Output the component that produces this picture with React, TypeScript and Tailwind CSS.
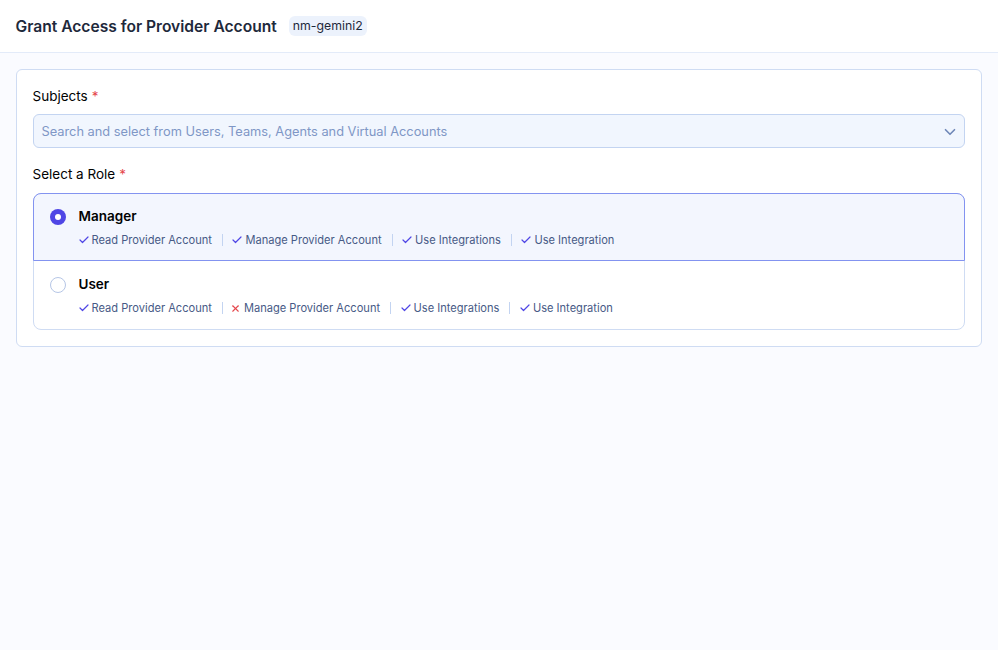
import { Check, X, ChevronDown } from "lucide-react";

const roles = [
  {
    name: "Manager",
    selected: true,
    perms: [
      { label: "Read Provider Account", ok: true },
      { label: "Manage Provider Account", ok: true },
      { label: "Use Integrations", ok: true },
      { label: "Use Integration", ok: true },
    ],
  },
  {
    name: "User",
    selected: false,
    perms: [
      { label: "Read Provider Account", ok: true },
      { label: "Manage Provider Account", ok: false },
      { label: "Use Integrations", ok: true },
      { label: "Use Integration", ok: true },
    ],
  },
];

export default function App() {
  return (
    <div className="min-h-[650px] bg-[#fafbff] font-['Inter',sans-serif] text-[#010202]">
      {/* Header */}
      <header className="flex h-[53px] items-center gap-3 border-b border-[#e3ebf9] bg-white pl-[15.5px]">
        <h1 className="pt-[2px] text-[15.6px] leading-6 font-semibold text-[#1e293b]">Grant Access for Provider Account</h1>
        <span className="rounded-md bg-[#ecf2fc] px-1 py-0.5 text-[12.3px] leading-4 text-[#1e293b]">nm-gemini2</span>
      </header>

      <div className="pt-4 pr-[16.5px] pb-4 pl-[15.5px]">
        <div className="rounded-md border border-[#cfdcf3] bg-white px-4 pt-4 pb-4">
          <div className="flex h-5 items-center pt-px text-[13.5px]">
            Subjects <span className="ml-1 text-[#e5484d]">*</span>
          </div>
          <div className="mt-2 flex h-[34px] items-center justify-between rounded-md border border-[#c3d4f1] bg-[#f1f6fe] pr-[5px] pl-2">
            <span className="pt-[2px] text-[12.8px] text-[#7f97c6]">Search and select from Users, Teams, Agents and Virtual Accounts</span>
            <ChevronDown className="mt-px h-[18px] w-[18px] text-[#6f88b8]" strokeWidth={2.2} />
          </div>

          <div className="mt-4 flex h-5 items-center pt-px text-[13.5px]">
            Select a Role <span className="ml-1 text-[#e5484d]">*</span>
          </div>

          <div className="mt-[9px] rounded-lg border border-[#cfdcf3]">
            {roles.map((role) => (
              <div
                key={role.name}
                className={
                  role.selected
                    ? "-m-px flex h-[68px] gap-[12.5px] rounded-t-lg border border-[#8393f0] bg-[#f3f6fe] pt-3 pl-[16.5px]"
                    : "flex h-[69px] gap-[12.5px] pt-[14px] pl-[16.5px]"
                }
              >
                {role.selected ? (
                  <span className="mt-[3px] flex h-4 w-4 items-center justify-center rounded-full bg-[#4f46e5]">
                    <span className="h-1.5 w-1.5 rounded-full bg-white" />
                  </span>
                ) : (
                  <span className="mt-[3px] h-4 w-4 rounded-full border border-[#b6c6e6] bg-white" />
                )}
                <div>
                  <div className="text-[13.5px] leading-5 font-semibold">{role.name}</div>
                  <div className="mt-[6px] flex items-center text-[11.1px] leading-4 text-[#475a86]">
                    {role.perms.map((p, i) => (
                      <div key={p.label} className="flex items-center">
                        {i > 0 && <span className="mr-[9.5px] ml-[10px] h-3 w-px bg-[#c3d4f1]" />}
                        {p.ok ? (
                          <Check className="mr-[2px] -ml-[1px] h-3 w-3 text-[#4f46e5]" strokeWidth={2.4} />
                        ) : (
                          <X className="mr-[3px] -ml-[2.5px] h-[11px] w-[11px] text-[#e5484d]" strokeWidth={2.4} />
                        )}
                        <span>{p.label}</span>
                      </div>
                    ))}
                  </div>
                </div>
              </div>
            ))}
          </div>
        </div>
      </div>
    </div>
  );
}
